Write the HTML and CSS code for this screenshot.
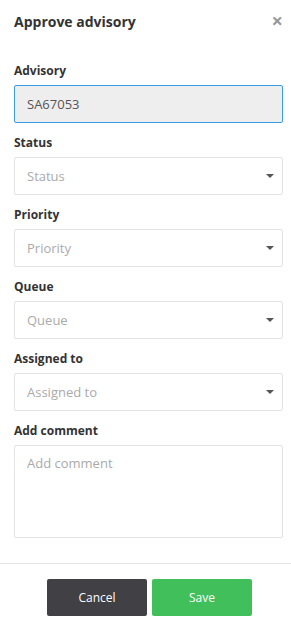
FILE: index.html
```html
<!DOCTYPE html>
<html lang="en">
<head>
    <meta charset="UTF-8">
    <meta name="viewport" content="width=device-width, initial-scale=1.0">
    <title>Approve advisory</title>
    <link rel="stylesheet" href="styles.css">
</head>
<body>
    <div class="modal">
        <div class="modal-header">
            <h2>Approve advisory</h2>
            <span class="close">&times;</span>
        </div>
        <div class="modal-body">
            <div class="field">
                <label>Advisory</label>
                <div class="input readonly">SA67053</div>
            </div>
            <div class="field">
                <label>Status</label>
                <div class="input select"><span>Status</span><i class="caret"></i></div>
            </div>
            <div class="field">
                <label>Priority</label>
                <div class="input select"><span>Priority</span><i class="caret"></i></div>
            </div>
            <div class="field">
                <label>Queue</label>
                <div class="input select"><span>Queue</span><i class="caret"></i></div>
            </div>
            <div class="field">
                <label>Assigned to</label>
                <div class="input select"><span>Assigned to</span><i class="caret"></i></div>
            </div>
            <div class="field">
                <label>Add comment</label>
                <div class="input textarea"><span>Add comment</span></div>
            </div>
        </div>
        <div class="modal-footer">
            <button class="btn btn-cancel">Cancel</button>
            <button class="btn btn-save">Save</button>
        </div>
    </div>
</body>
</html>
```

FILE: styles.css
```css
body { margin: 0; background: #fff; font-family: "Open Sans", sans-serif; color: #333; }
.modal { width: 291px; height: 630px; display: flex; flex-direction: column; }
.modal-header { display: flex; justify-content: space-between; align-items: center; height: 42px; padding: 0 8px 0 14px; }
.modal-header h2 { margin: 0; font-size: 14px; font-weight: 700; color: #333; }
.close { font-size: 20px; font-weight: 700; color: #999; line-height: 1; }
.modal-body { padding: 20px 8px 0 14px; flex: 1; }
.field { margin-bottom: 11px; }
.field label { display: block; font-size: 12px; font-weight: 700; line-height: 18px; margin-bottom: 5px; }
.input { box-sizing: border-box; height: 38px; border: 1px solid #e3e3e3; border-radius: 2px; padding: 0 12px; display: flex; align-items: center; font-size: 13px; color: #aaa; }
.input.readonly { background: #eee; border-color: #3b9de0; color: #555; }
.select { justify-content: space-between; padding-right: 8px; }
.caret { width: 0; height: 0; border-left: 4px solid transparent; border-right: 4px solid transparent; border-top: 4px solid #555; }
.textarea { height: 93px; align-items: flex-start; padding-top: 8px; }
.modal-footer { border-top: 1px solid #e5e5e5; display: flex; justify-content: center; gap: 5px; padding: 15px 0 14px 8px; }
.btn { width: 100px; height: 37px; border: 0; border-radius: 2px; font-family: "Open Sans", sans-serif; font-size: 12px; color: #fff; }
.btn-cancel { background: #404045; }
.btn-save { background: #40bf5a; }
```
